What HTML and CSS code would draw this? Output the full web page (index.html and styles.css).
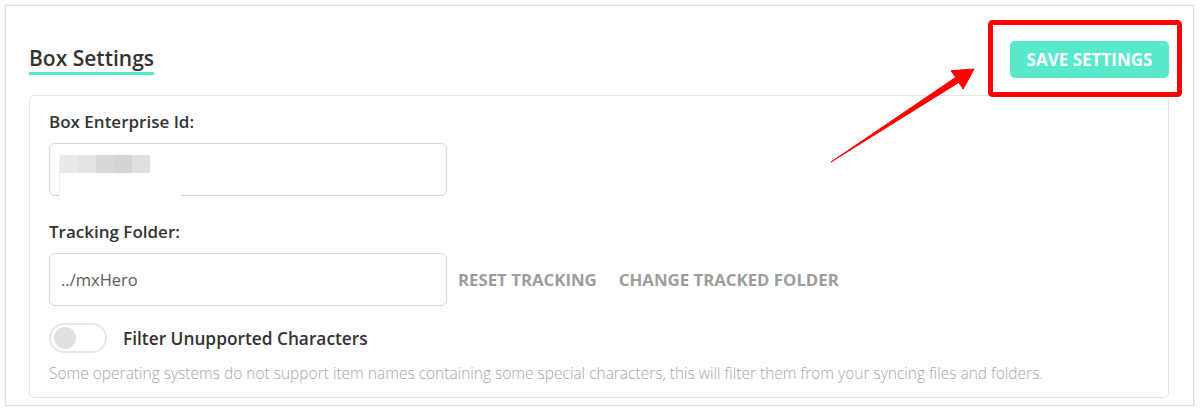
FILE: index.html
```html
<!DOCTYPE html>
<html lang="en">
<head>
    <meta charset="UTF-8">
    <title>Box Settings</title>
    <link rel="stylesheet" href="styles.css">
</head>
<body>

    <div class="panel">
        <div class="panel-head">
            <h2 class="panel-title">Box Settings</h2>
            <button type="button" class="save-btn">SAVE SETTINGS</button>
        </div>

        <div class="settings-box">
            <label class="field-label">Box Enterprise Id:</label>
            <div class="field-input redacted">
                <div class="blur-patch">
                    <span class="px px1"></span><span class="px px2"></span><span class="px px3"></span><span class="px px4"></span><span class="px px5"></span>
                </div>
            </div>

            <label class="field-label">Tracking Folder:</label>
            <div class="folder-row">
                <div class="field-input">../mxHero</div>
                <a class="text-link">RESET TRACKING</a>
                <a class="text-link">CHANGE TRACKED FOLDER</a>
            </div>

            <div class="toggle-row">
                <span class="toggle"><span class="knob"></span></span>
                <span class="toggle-label">Filter Unupported Characters</span>
            </div>
            <p class="hint">Some operating systems do not support item names containing some special characters, this will filter them from your syncing files and folders.</p>
        </div>
    </div>

    <!-- annotation drawn over the screenshot -->
    <svg class="annotation" width="1200" height="413" viewBox="0 0 1200 413">
        <rect x="990.5" y="22.5" width="189" height="72" rx="2" fill="none" stroke="#f00" stroke-width="5"/>
        <polygon fill="#f00" stroke="#f00" stroke-width="1" stroke-linejoin="round"
                 points="831,162 955.6,77.4 951.2,70.7 974,69 963.2,89.1 958.8,82.4"/>
    </svg>

</body>
</html>
```

FILE: styles.css
```css
body {
    margin: 0;
    padding: 5px 6px 5px 5px;
    background-color: #fff;
    font-family: "Open Sans", Arial, sans-serif;
    color: #333;
}

.panel {
    border: 1px solid #dedede;
    box-shadow: 0 0 2px rgba(0, 0, 0, 0.12);
    padding: 35px 24px 8px 23px;
    height: 356px;
}

.panel-head {
    display: flex;
    justify-content: space-between;
    align-items: center;
}

.panel-title {
    margin: 0;
    font-size: 21px;
    font-weight: 600;
    line-height: 27px;
    border-bottom: 3px solid #55e8c9;
}

.save-btn {
    width: 159px;
    height: 37px;
    border: none;
    border-radius: 5px;
    background-color: #58e9cc;
    color: #fff;
    font-family: "Open Sans", Arial, sans-serif;
    font-size: 17px;
    font-weight: 700;
    cursor: pointer;
}

.settings-box {
    margin-top: 17px;
    border: 1px solid #e4e4e4;
    border-radius: 5px;
    padding: 15px 19px 14px 19px;
}

.field-label {
    display: block;
    font-size: 17px;
    font-weight: 600;
    line-height: 22px;
    margin-bottom: 10px;
}

.field-input {
    position: relative;
    box-sizing: border-box;
    width: 398px;
    height: 53px;
    border: 1px solid #d6d6d6;
    border-radius: 6px;
    padding: 0 11px;
    display: flex;
    align-items: center;
    font-size: 16.5px;
    color: #5c5c5c;
}

.redacted {
    margin-bottom: 25px;
}

.blur-patch {
    position: absolute;
    left: 9px;
    top: 9px;
    width: 121px;
    height: 45px;
    background-color: #fff;
    border-left: 1px solid #f2f2f2;
    display: flex;
    align-items: flex-start;
    padding-top: 2px;
}

.px {
    width: 18px;
    height: 18px;
}

.px1 { background-color: #e9e9e9; }
.px2 { background-color: #e3e3e3; }
.px3 { background-color: #d7d7d7; }
.px4 { background-color: #d3d3d3; }
.px5 { background-color: #dfdfdf; }

.folder-row {
    display: flex;
    align-items: center;
}

.text-link {
    margin-left: 11px;
    margin-right: 11px;
    font-size: 16.8px;
    font-weight: 700;
    color: #9d9d9d;
}

.toggle-row {
    display: flex;
    align-items: center;
    margin-top: 17px;
}

.toggle {
    box-sizing: border-box;
    width: 58px;
    height: 30px;
    border: 2px solid #e6e6e6;
    border-radius: 15px;
    padding: 2px 3px;
}

.knob {
    display: block;
    width: 22px;
    height: 22px;
    border-radius: 50%;
    background-color: #e0e0e0;
}

.toggle-label {
    margin-left: 16px;
    font-size: 17.3px;
    font-weight: 600;
}

.hint {
    margin: 10px 0 0 0;
    font-size: 15.5px;
    font-weight: 300;
    line-height: 20px;
    color: #a6a6a6;
}

.annotation {
    position: absolute;
    top: 0;
    left: 0;
    pointer-events: none;
}
```
